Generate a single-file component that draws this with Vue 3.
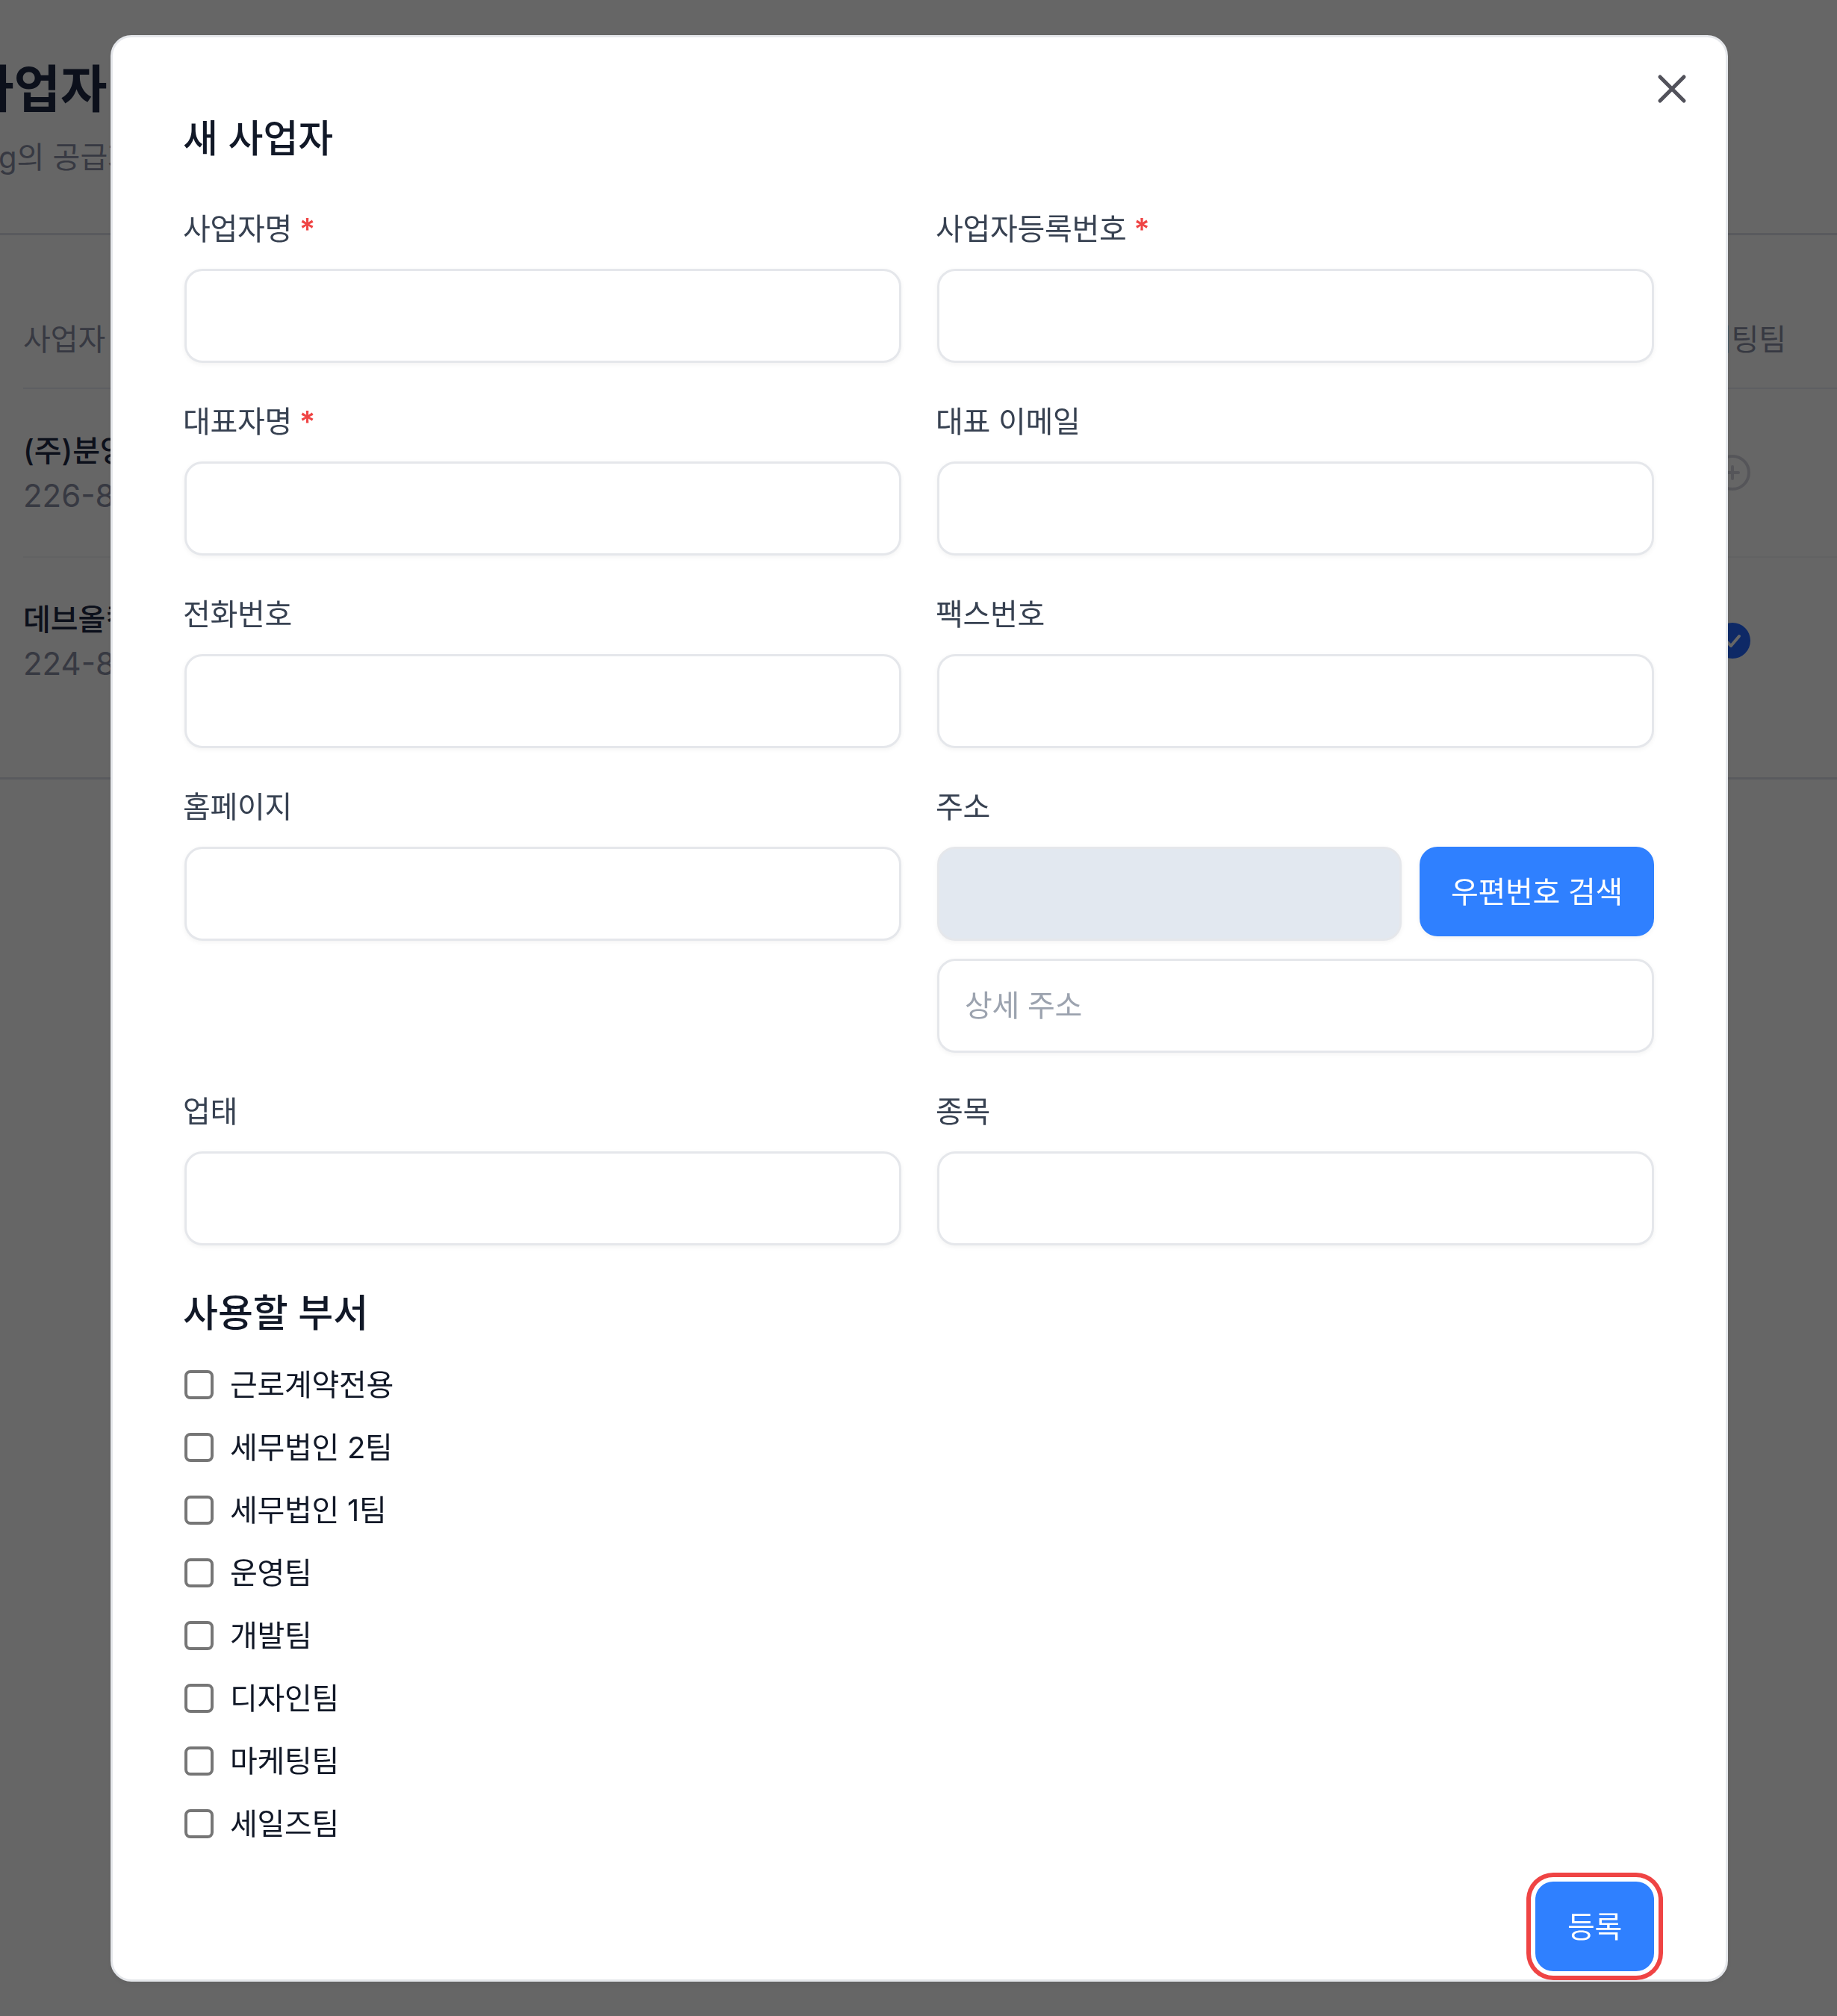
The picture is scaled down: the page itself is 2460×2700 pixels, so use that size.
<script setup>
const rows = [
  [
    { label: '사업자명', required: true },
    { label: '사업자등록번호', required: true },
  ],
  [{ label: '대표자명', required: true }, { label: '대표 이메일' }],
  [{ label: '전화번호' }, { label: '팩스번호' }],
]
const departments = ['근로계약전용', '세무법인 2팀', '세무법인 1팀', '운영팀', '개발팀', '디자인팀', '마케팅팀', '세일즈팀']
</script>

<template>
  <div class="page">
    <header class="page-head">
      <h1 class="page-title">사업자</h1>
      <p class="page-sub">g의 공급자</p>
    </header>
    <section class="table">
      <div class="t-head"><span>사업자</span><span>마케팅팀</span></div>
      <div class="t-row first">
        <div><div class="name">(주)분양</div><div class="num">226-8</div></div>
        <svg class="circle" viewBox="0 0 48 48" fill="none" stroke="#d4d5de" stroke-width="4" stroke-linecap="round">
          <circle cx="24" cy="24" r="22" />
          <path d="M24 16v16M16 24h16" />
        </svg>
      </div>
      <div class="t-row second">
        <div><div class="name">데브올컴퍼니</div><div class="num">224-8</div></div>
        <svg class="circle check" viewBox="0 0 48 48" fill="none" stroke="#fff" stroke-width="4" stroke-linecap="round" stroke-linejoin="round">
          <circle cx="24" cy="24" r="24" fill="#2468ff" stroke="none" />
          <path d="M15 24l7 7 11-13" />
        </svg>
      </div>
    </section>
  </div>

  <div class="overlay">
    <div class="modal">
      <button class="close" type="button" aria-label="닫기">
        <svg viewBox="0 0 24 24" width="64" height="64" fill="none" stroke="currentColor" stroke-width="1.9" stroke-linecap="round" stroke-linejoin="round"><path d="M6 18L18 6M6 6l12 12" /></svg>
      </button>
      <h2 class="title">새 사업자</h2>
      <div class="grid">
        <template v-for="(row, i) in rows" :key="i">
          <div v-for="f in row" :key="f.label" class="field">
            <label class="label">{{ f.label }}<span v-if="f.required" class="req"> *</span></label>
            <input class="input" type="text" />
          </div>
        </template>
        <div class="field">
          <label class="label">홈페이지</label>
          <input class="input" type="text" />
        </div>
        <div class="field">
          <label class="label">주소</label>
          <div class="addr">
            <input class="input disabled" type="text" disabled />
            <button class="btn zip" type="button">우편번호 검색</button>
          </div>
          <input class="input detail" type="text" placeholder="상세 주소" />
        </div>
        <div class="field">
          <label class="label">업태</label>
          <input class="input" type="text" />
        </div>
        <div class="field">
          <label class="label">종목</label>
          <input class="input" type="text" />
        </div>
      </div>
      <h3 class="section">사용할 부서</h3>
      <div class="depts">
        <label v-for="d in departments" :key="d" class="dept">
          <input class="check-box" type="checkbox" />
          <span class="dept-name">{{ d }}</span>
        </label>
      </div>
      <div class="footer">
        <button class="btn submit" type="button">등록</button>
      </div>
    </div>
  </div>
</template>

<style>
html, body { margin: 0; background: #fff; }
</style>

<style scoped>
.page {
  height: 2700px;
  overflow: hidden;
  background: #fff;
  font-family: Inter, "Noto Sans CJK KR", sans-serif;
  box-sizing: border-box;
}
.page-head {
  height: 315px;
  box-sizing: border-box;
  padding-top: 71px;
  border-bottom: 3px solid #dfe0ea;
}
.page-title {
  margin: 0 0 0 -44px;
  font-size: 68px;
  line-height: 96px;
  font-weight: 700;
  color: #1f2a44;
}
.page-sub {
  margin: 16px 0 0 -2px;
  font-size: 40px;
  line-height: 56px;
  color: #8b90a5;
  white-space: nowrap;
}
.table { padding: 0 0 0 31px; }
.t-head {
  display: flex;
  justify-content: space-between;
  align-items: center;
  margin-top: 67px;
  height: 139px;
  box-sizing: border-box;
  padding-right: 68px;
  padding-top: 2px;
  font-size: 40px;
  color: #8b90a5;
  border-bottom: 2px solid #eceef5;
}
.t-row {
  display: flex;
  justify-content: space-between;
  padding-right: 116px;
  box-sizing: border-box;
  white-space: nowrap;
}
.t-row.first { height: 226px; border-bottom: 2px solid #f3f4f8; align-items: center; }
.t-row.second {
  height: 297px;
  margin-left: -31px;
  padding-left: 31px;
  padding-top: 51px;
  border-bottom: 3px solid #dfe0ea;
  align-items: flex-start;
}
.name { font-size: 40px; line-height: 64px; font-weight: 500; color: #1f2a44; }
.num { font-size: 42px; line-height: 60px; color: #8b90a5; }
.first .num { margin-top: -2px; }
.second .num { margin-top: -3px; }
.circle {
  display: block;
  width: 48px;
  height: 48px;
  flex: none;
}
.check { margin-top: 36px; }

.overlay {
  position: fixed;
  inset: 0;
  background: rgba(0, 0, 0, 0.6);
  display: flex;
  align-items: center;
  justify-content: center;
  padding-left: 2px;
  font-family: Inter, "Noto Sans CJK KR", sans-serif;
}
.modal {
  position: relative;
  width: 2166px;
  flex: none;
  box-sizing: border-box;
  background: #fff;
  border: 3px solid #e5e7eb;
  border-radius: 28px;
  padding: 96px 96px 11px;
  box-shadow: 0 4px 12px rgba(0, 0, 0, 0.05);
}
.close {
  position: absolute;
  top: 37px;
  right: 40px;
  padding: 0;
  border: 0;
  background: none;
  color: #52525b;
  display: flex;
}
.title {
  margin: 0 0 50px -2px;
  font-size: 51px;
  line-height: 80px;
  font-weight: 500;
  color: #111827;
}
.grid {
  display: grid;
  grid-template-columns: 960px 960px;
  column-gap: 48px;
  row-gap: 48px;
}
.field { display: flex; flex-direction: column; }
.label {
  font-size: 40px;
  letter-spacing: -0.3px;
  line-height: 58px;
  padding-top: 2px;
  margin: 0 0 24px -2px;
  color: #374151;
}
.req { color: #ef4444; font-weight: 600; }
.input {
  display: block;
  width: 100%;
  min-width: 0;
  height: 126px;
  box-sizing: border-box;
  border: 3px solid #e5e7eb;
  border-radius: 24px;
  background: #fff;
  padding: 0 34px;
  font: inherit;
  font-size: 40px;
  letter-spacing: -0.3px;
  color: #111827;
  box-shadow: 0 2px 6px rgba(0, 0, 0, 0.05);
  outline: none;
}
.input::placeholder { color: #9ca3af; opacity: 1; }
.input.disabled { background: #e2e8f0; flex: 1; }
.input.detail { margin-top: 24px; }
.addr { display: flex; gap: 24px; align-items: flex-start; }
.btn {
  height: 120px;
  border: 0;
  border-radius: 24px;
  background: #2f80ff;
  color: #fff;
  font: inherit;
  font-size: 40px;
  letter-spacing: -0.3px;
  padding: 0 0 3px;
  box-shadow: 0 2px 6px rgba(0, 0, 0, 0.05);
  box-sizing: border-box;
}
.zip { width: 314px; flex: none; }
.section {
  margin: 55px 0 29px -2px;
  font-size: 51px;
  line-height: 72px;
  font-weight: 500;
  color: #111827;
}
.depts { display: flex; flex-direction: column; gap: 24px; }
.dept {
  display: flex;
  align-items: center;
  gap: 24px;
  height: 60px;
  font-size: 40px;
  letter-spacing: -0.3px;
  color: #111827;
}
.dept-name { padding-bottom: 4px; margin-left: -2px; }
.check-box {
  appearance: none;
  width: 39px;
  height: 39px;
  margin: 2px 0 0;
  box-sizing: border-box;
  border: 4px solid #767676;
  border-radius: 8px;
  background: #fff;
  flex: none;
}
.footer { display: flex; justify-content: flex-end; margin-top: 48px; }
.submit {
  width: 159px;
  box-shadow: 0 0 0 6px #fff, 0 0 0 12px #ef4444;
}
</style>
